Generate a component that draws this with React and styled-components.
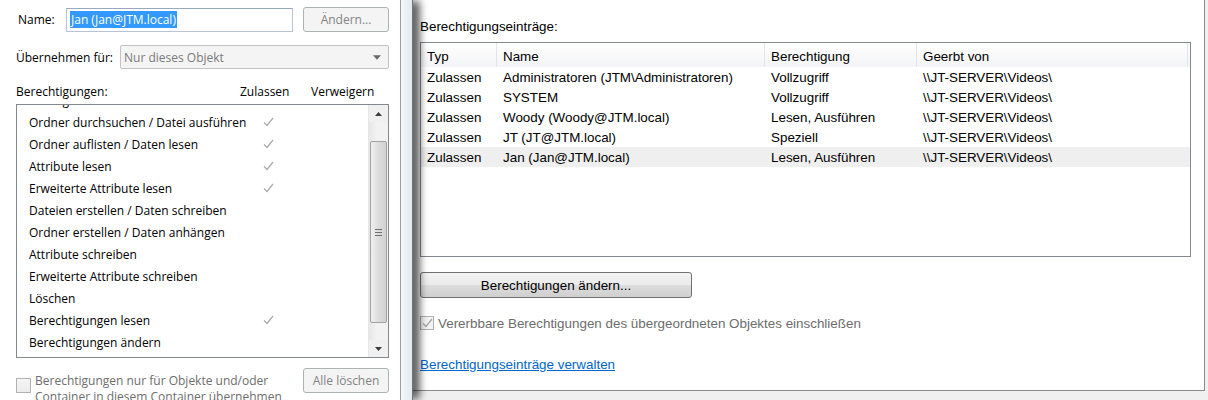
import React from 'react'
import styled, { createGlobalStyle } from 'styled-components'

const GlobalStyle = createGlobalStyle`
  html, body { margin: 0; padding: 0; }
  body { background: #f0f0f0; }
`

const permissions = [
  { name: 'Vollzugriff', allow: false },
  { name: 'Ordner durchsuchen / Datei ausführen', allow: true },
  { name: 'Ordner auflisten / Daten lesen', allow: true },
  { name: 'Attribute lesen', allow: true },
  { name: 'Erweiterte Attribute lesen', allow: true },
  { name: 'Dateien erstellen / Daten schreiben', allow: false },
  { name: 'Ordner erstellen / Daten anhängen', allow: false },
  { name: 'Attribute schreiben', allow: false },
  { name: 'Erweiterte Attribute schreiben', allow: false },
  { name: 'Löschen', allow: false },
  { name: 'Berechtigungen lesen', allow: true },
  { name: 'Berechtigungen ändern', allow: false },
  { name: 'Besitz übernehmen', allow: false },
]

const entries = [
  ['Zulassen', 'Administratoren (JTM\\Administratoren)', 'Vollzugriff', '\\\\JT-SERVER\\Videos\\'],
  ['Zulassen', 'SYSTEM', 'Vollzugriff', '\\\\JT-SERVER\\Videos\\'],
  ['Zulassen', 'Woody (Woody@JTM.local)', 'Lesen, Ausführen', '\\\\JT-SERVER\\Videos\\'],
  ['Zulassen', 'JT (JT@JTM.local)', 'Speziell', '\\\\JT-SERVER\\Videos\\'],
  ['Zulassen', 'Jan (Jan@JTM.local)', 'Lesen, Ausführen', '\\\\JT-SERVER\\Videos\\'],
]

const Tick = ({ color = '#ababab' }) => (
  <svg width="11" height="10" viewBox="0 0 11 10">
    <polyline points="1,5.5 4,8.5 10,1" fill="none" stroke={color} strokeWidth="1.3" />
  </svg>
)

const Arrow = ({ up, color = '#3c3c3c' }) => (
  <svg width="7" height="4" viewBox="0 0 7 4">
    <polygon points={up ? '0,4 3.5,0 7,4' : '0,0 7,0 3.5,4'} fill={color} />
  </svg>
)

function PermissionEntry() {
  return (
    <LeftWindow>
      <NameRow>
        <NameLabel>Name:</NameLabel>
        <TextBox>
          <Selection>Jan (Jan@JTM.local)</Selection>
        </TextBox>
        <WinButton disabled>Ändern...</WinButton>
      </NameRow>
      <ApplyRow>
        <ApplyLabel>Übernehmen für:</ApplyLabel>
        <Combo>
          <span>Nur dieses Objekt</span>
          <Arrow color="#6a6a6a" />
        </Combo>
      </ApplyRow>
      <ColumnsHeader>
        <span>Berechtigungen:</span>
        <span>Zulassen</span>
        <span>Verweigern</span>
      </ColumnsHeader>
      <ListBox>
        <RowsViewport>
          <Rows>
            {permissions.map((p) => (
              <PermRow key={p.name}>
                <span>{p.name}</span>
                <TickCell>{p.allow && <Tick />}</TickCell>
              </PermRow>
            ))}
          </Rows>
        </RowsViewport>
        <ScrollBar>
          <ScrollArrow><Arrow up /></ScrollArrow>
          <Track>
            <Thumb>
              <Grip />
            </Thumb>
          </Track>
          <ScrollArrow><Arrow /></ScrollArrow>
        </ScrollBar>
      </ListBox>
      <BottomRow>
        <CheckWrap>
          <CheckBox />
          <CheckText>
            Berechtigungen nur für Objekte und/oder
            <br />
            Container in diesem Container übernehmen
          </CheckText>
        </CheckWrap>
        <WinButton disabled>Alle löschen</WinButton>
      </BottomRow>
    </LeftWindow>
  )
}

function SecuritySettings() {
  return (
    <RightArea>
      <RightPanel>
        <SectionLabel>Berechtigungseinträge:</SectionLabel>
        <ListView>
          <HeaderRow>
            <HeaderCell>Typ</HeaderCell>
            <HeaderCell>Name</HeaderCell>
            <HeaderCell>Berechtigung</HeaderCell>
            <HeaderCell>Geerbt von</HeaderCell>
          </HeaderRow>
          {entries.map((e, i) => (
            <EntryRow key={e[1]} $selected={i === entries.length - 1}>
              {e.map((c, j) => (
                <EntryCell key={j}>{c}</EntryCell>
              ))}
            </EntryRow>
          ))}
        </ListView>
        <BigButton>Berechtigungen ändern...</BigButton>
        <InheritRow>
          <SmallCheck>
            <Tick color="#a6a6a6" />
          </SmallCheck>
          Vererbbare Berechtigungen des übergeordneten Objektes einschließen
        </InheritRow>
        <ManageLink>Berechtigungseinträge verwalten</ManageLink>
      </RightPanel>
    </RightArea>
  )
}

export default function App() {
  return (
    <>
      <GlobalStyle />
      <Screen>
        <PermissionEntry />
        <Frame />
        <SecuritySettings />
      </Screen>
    </>
  )
}

const Screen = styled.div`
  width: 1208px;
  height: 400px;
  display: flex;
  overflow: hidden;
`

/* left dialog */
const LeftWindow = styled.div`
  width: 401px;
  flex-shrink: 0;
  box-sizing: border-box;
  border-right: 1px solid #a0a0a0;
  background: #fff;
  padding: 7px 11px 0 16px;
  display: flex;
  flex-direction: column;
  font-family: "Open Sans", sans-serif;
  font-size: 12px;
  color: #000;
`
const NameRow = styled.div`
  display: flex;
  align-items: center;
  height: 26px;
`
const NameLabel = styled.div`
  width: 50px;
  box-sizing: border-box;
  padding-left: 2px;
`
const TextBox = styled.div`
  width: 227px;
  height: 24px;
  box-sizing: border-box;
  border: 1px solid #b7c3d3;
  border-top-color: #98a8bf;
  display: flex;
  align-items: center;
  padding-left: 3px;
`
const Selection = styled.span`
  background: #3399ff;
  color: #fff;
  line-height: 17px;
  padding: 0 1px;
`
const WinButton = styled.button`
  margin-left: auto;
  width: 86px;
  height: 25px;
  border: 1px solid #adb2b5;
  border-radius: 3px;
  background: #f4f4f4;
  color: #838383;
  font-family: inherit;
  font-size: 12px;
  padding: 0;
`
const ApplyRow = styled.div`
  margin-top: 13px;
  display: flex;
  align-items: center;
  height: 24px;
`
const ApplyLabel = styled.div`
  width: 104px;
`
const Combo = styled.div`
  flex: 1;
  height: 24px;
  box-sizing: border-box;
  border: 1px solid #c3c3c3;
  border-radius: 2px;
  background: #f4f4f4;
  color: #7a7a7a;
  display: flex;
  align-items: center;
  justify-content: space-between;
  padding: 0 7px 0 3px;
  svg { width: 8px; height: 5px; }
`
const ColumnsHeader = styled.div`
  margin-top: 15px;
  display: grid;
  grid-template-columns: 224px 71px 1fr;
  line-height: 16px;
`
const ListBox = styled.div`
  margin-top: 4px;
  height: 254px;
  box-sizing: border-box;
  border: 1px solid #828790;
  display: flex;
`
const RowsViewport = styled.div`
  flex: 1;
  overflow: hidden;
  padding-left: 12px;
`
const Rows = styled.div`
  margin-top: -16px;
`
const PermRow = styled.div`
  display: grid;
  grid-template-columns: 216px 46px;
  height: 22px;
  align-items: center;
  white-space: nowrap;
`
const TickCell = styled.div`
  display: flex;
  justify-content: center;
`
const ScrollBar = styled.div`
  width: 19px;
  display: flex;
  flex-direction: column;
  background: #f0f0f0;
  border-left: 1px solid #e6e6e6;
`
const ScrollArrow = styled.div`
  height: 17px;
  display: flex;
  align-items: center;
  justify-content: center;
`
const Track = styled.div`
  flex: 1;
  display: flex;
  padding: 19px 1px 17px 1px;
  background: linear-gradient(to right, #e6e6e6, #f2f2f2 40%, #f2f2f2);
`
const Thumb = styled.div`
  flex: 1;
  border: 1px solid #a2a2a2;
  border-radius: 2px;
  background: linear-gradient(to right, #efefef, #dcdcdc 50%, #d2d2d2);
  display: flex;
  align-items: center;
  justify-content: center;
`
const Grip = styled.div`
  width: 7px;
  height: 7px;
  background: repeating-linear-gradient(to bottom, #6f6f6f 0 1px, transparent 1px 3px);
`
const BottomRow = styled.div`
  margin-top: 10px;
  display: flex;
  align-items: flex-start;
`
const CheckWrap = styled.div`
  display: flex;
  align-items: flex-start;
`
const CheckBox = styled.div`
  margin-top: 10px;
  width: 15px;
  height: 15px;
  box-sizing: border-box;
  border: 1px solid #b1b1b1;
  background: linear-gradient(#f4f4f4, #ececec);
`
const CheckText = styled.div`
  margin-left: 4px;
  margin-top: 5px;
  line-height: 16px;
  color: #6d6d6d;
`

/* window edge between dialogs */
const Frame = styled.div`
  width: 12px;
  flex-shrink: 0;
  box-sizing: border-box;
  background: linear-gradient(to right, #f4f7fb, #e3eaf3);
  border-right: 1px solid #6f6f6f;
  position: relative;
  z-index: 1;
  box-shadow: 7px 0 9px -1px rgba(0, 0, 0, 0.75);
`

/* right dialog */
const RightArea = styled.div`
  flex: 1;
  display: flex;
  flex-direction: column;
`
const RightPanel = styled.div`
  height: 391px;
  margin-right: 3px;
  box-sizing: border-box;
  background: #fff;
  border-right: 1px solid #8a8a8a;
  border-bottom: 1px solid #8a8a8a;
  padding: 19px 13px 0 7px;
  font-family: "Liberation Sans", Arial, sans-serif;
  font-size: 13.4px;
  color: #000;
  display: flex;
  flex-direction: column;
  align-items: flex-start;
`
const SectionLabel = styled.div`
  line-height: 16px;
`
const ListView = styled.div`
  margin-top: 7px;
  align-self: stretch;
  height: 215px;
  box-sizing: border-box;
  border: 1px solid #828790;
`
const columns = '76px 268px 152px 271px'
const HeaderRow = styled.div`
  display: grid;
  grid-template-columns: ${columns};
  height: 24px;
  background: linear-gradient(#ffffff, #f3f4f6);
`
const HeaderCell = styled.div`
  border-right: 1px solid #e3e5e8;
  padding: 3px 0 0 6px;
  display: flex;
  align-items: center;
`
const EntryRow = styled.div`
  display: grid;
  grid-template-columns: ${columns};
  height: 20px;
  align-items: center;
  background: ${(p) => (p.$selected ? '#efefef' : 'transparent')};
`
const EntryCell = styled.div`
  padding-left: 6px;
  white-space: nowrap;
`
const BigButton = styled.button`
  margin-top: 15px;
  width: 272px;
  height: 26px;
  border: 1px solid #707070;
  border-radius: 3px;
  background: linear-gradient(#f2f2f2 0%, #ebebeb 50%, #dddddd 51%, #cfcfcf 100%);
  font-family: inherit;
  font-size: 13.4px;
  color: #000;
  padding: 0;
`
const InheritRow = styled.div`
  margin-top: 17px;
  display: flex;
  align-items: center;
  height: 16px;
  color: #6d6d6d;
`
const SmallCheck = styled.div`
  width: 14px;
  height: 14px;
  box-sizing: border-box;
  border: 1px solid #b1b1b1;
  background: #f4f4f4;
  margin-right: 4px;
  display: flex;
  align-items: center;
  justify-content: center;
`
const ManageLink = styled.a`
  margin-top: 26px;
  line-height: 16px;
  color: #0066cc;
  text-decoration: underline;
  cursor: pointer;
`
